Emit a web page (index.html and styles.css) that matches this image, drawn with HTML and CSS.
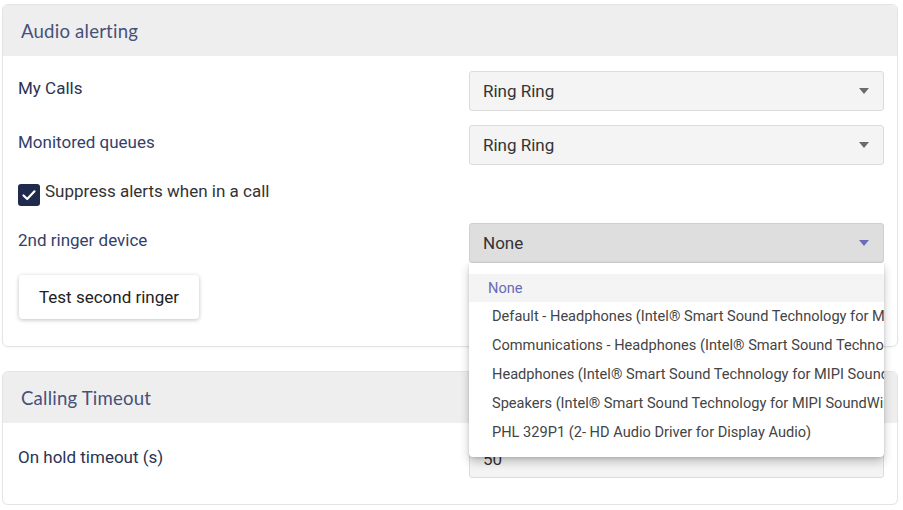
FILE: index.html
```html
<!DOCTYPE html>
<html>
<head>
<meta charset="utf-8">
<link rel="stylesheet" href="styles.css">
</head>
<body>
<div class="page">
  <section class="card">
    <div class="card-header">Audio alerting</div>
    <div class="card-body">
      <div class="row">
        <div class="label label-dark">My Calls</div>
        <div class="select"><span>Ring Ring</span><span class="arrow"></span></div>
      </div>
      <div class="row">
        <div class="label">Monitored queues</div>
        <div class="select"><span>Ring Ring</span><span class="arrow"></span></div>
      </div>
      <div class="check-row">
        <span class="checkbox">
          <svg width="16" height="16" viewBox="0 0 16 16"><path d="M2.5 8.5 L6.2 12 L13.5 4.3" fill="none" stroke="#fff" stroke-width="2.2" stroke-linecap="round" stroke-linejoin="round"/></svg>
        </span>
        <span class="check-label">Suppress alerts when in a call</span>
      </div>
      <div class="row row-ringer">
        <div class="label">2nd ringer device</div>
        <div class="select-wrap">
          <div class="select select-open"><span>None</span><span class="arrow arrow-active"></span></div>
          <ul class="menu">
            <li class="menu-item menu-selected">None</li>
            <li class="menu-item">Default - Headphones (Intel® Smart Sound Technology for MIPI SoundWire Audio)</li>
            <li class="menu-item">Communications - Headphones (Intel® Smart Sound Technology for MIPI SoundWire Audio)</li>
            <li class="menu-item">Headphones (Intel® Smart Sound Technology for MIPI SoundWire Audio)</li>
            <li class="menu-item">Speakers (Intel® Smart Sound Technology for MIPI SoundWire Audio)</li>
            <li class="menu-item">PHL 329P1 (2- HD Audio Driver for Display Audio)</li>
          </ul>
        </div>
      </div>
      <button class="btn">Test second ringer</button>
    </div>
  </section>

  <section class="card card-timeout">
    <div class="card-header">Calling Timeout</div>
    <div class="card-body body-timeout">
      <div class="row">
        <div class="label label-dark">On hold timeout (s)</div>
        <div class="input">50</div>
      </div>
    </div>
  </section>
</div>
</body>
</html>
```

FILE: styles.css
```css
* { box-sizing: border-box; }
html, body { margin: 0; padding: 0; background: #ffffff; }
body { font-family: Roboto, "Liberation Sans", sans-serif; }

.page {
  padding: 4px 5px 0 2px;
}

.card {
  border: 1px solid #e4e4e4;
  border-radius: 6px;
  background: #fff;
  box-shadow: 0 1px 2px rgba(0,0,0,0.04);
}
.card-timeout { margin-top: 24px; }

.card-header {
  height: 51px;
  background: #eeeeee;
  border-radius: 5px 5px 0 0;
  padding: 0 0 0 18px;
  display: flex;
  align-items: center;
  font-family: Lato, "Noto Sans", sans-serif;
  font-size: 18.6px;
  color: #46517a;
  letter-spacing: 0.2px;
}

.card-body {
  padding: 15px 13px 27px 15px;
  display: flex;
  flex-direction: column;
  align-items: flex-start;
}
.body-timeout { padding-top: 17px; padding-bottom: 26px; }

.row {
  display: flex;
  width: 100%;
  align-items: flex-start;
  margin-bottom: 14px;
}
.body-timeout .row { margin-bottom: 0; }

.label {
  flex: 1;
  padding-top: 7px;
  line-height: 20px;
  font-size: 17px;
  color: #34406a;
}
.label-dark { color: #2a3352; }

.select, .input {
  width: 415px;
  height: 40px;
  background: #f4f4f4;
  border: 1px solid #dcdcdc;
  border-radius: 3px;
  display: flex;
  align-items: center;
  justify-content: space-between;
  padding: 0 14px 0 13px;
  font-size: 17px;
  color: #333;
}
.input { height: 38px; }
.body-timeout .label { padding-top: 7px; }

.arrow {
  width: 0; height: 0;
  border-left: 5.5px solid transparent;
  border-right: 5.5px solid transparent;
  border-top: 6px solid #6b6b6b;
}
.arrow-active { border-top-color: #6c6cb9; }

.select-open {
  background: #dedede;
  border-color: #cfcfcf;
}

.check-row {
  display: flex;
  align-items: flex-start;
  margin: 4px 0 0 0;
  height: 22px;
}
.checkbox {
  width: 22px; height: 22px;
  background: #1f2a4c;
  border-radius: 3px;
  display: flex;
  align-items: center;
  justify-content: center;
  margin-top: 1px;
}
.check-label {
  margin-left: 5px;
  font-size: 17px;
  line-height: 20px;
  color: #333;
  margin-top: -2px;
}

.row-ringer { margin-top: 18px; margin-bottom: 12px; }
.select-wrap { position: relative; }

.menu {
  position: absolute;
  top: 40px;
  left: 0;
  width: 415px;
  margin: 0;
  padding: 11px 0 10px 0;
  list-style: none;
  background: #fff;
  border-radius: 0 0 4px 4px;
  box-shadow: 0 5px 10px rgba(0,0,0,0.22), 0 1px 3px rgba(0,0,0,0.12);
  overflow: hidden;
  z-index: 10;
}
.menu-item {
  height: 29px;
  line-height: 29px;
  padding-left: 23px;
  white-space: nowrap;
  overflow: hidden;
  font-size: 14.6px;
  color: #444;
}
.menu-selected {
  padding-left: 19px;
  background: #f4f4f4;
  color: #6a6ab4;
  height: 28px;
  line-height: 28px;
}

.btn {
  margin-left: 1px;
  height: 44px;
  padding: 0 20px;
  background: #fff;
  border: none;
  border-radius: 4px;
  box-shadow: 0 1px 4px rgba(0,0,0,0.25);
  font-family: Roboto, "Liberation Sans", sans-serif;
  font-size: 17px;
  color: #222;
}
```
